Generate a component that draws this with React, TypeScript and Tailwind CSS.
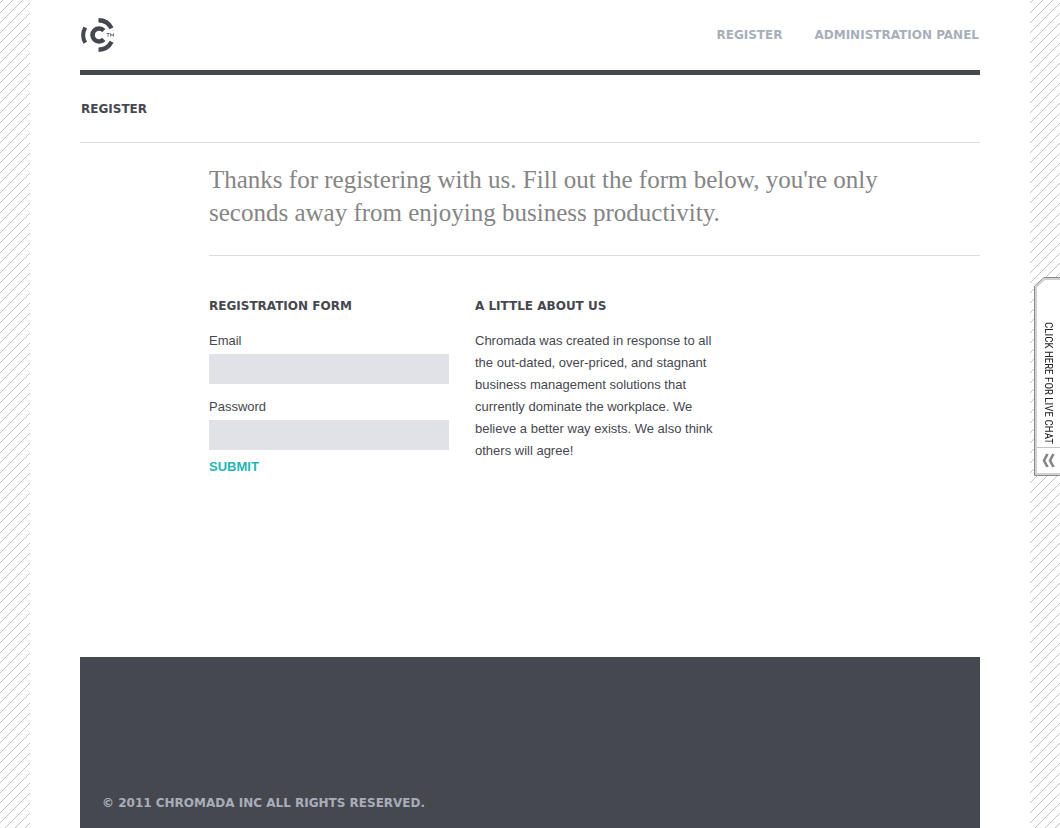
const stripes =
  "bg-[linear-gradient(135deg,#c4c4c7_0_3%,transparent_3%_47%,#c4c4c7_47%_53%,transparent_53%)] bg-size-[10px_10px] bg-position-[3px_0px]";

const caps = "font-['DejaVu_Sans','Verdana',sans-serif] text-[12px] leading-4 font-bold uppercase";

function Logo() {
  return (
    <svg viewBox="0 0 34 34" className="size-[34px]" fill="none" stroke="#464850" aria-hidden="true">
      <path d="M17.500 2.300A15 15 0 0 1 30.600 10.300" strokeWidth="4.400" />
      <path d="M30.600 23.700A15 15 0 0 1 17.500 31.700" strokeWidth="4.400" />
      <path d="M4.300 9.500A15.500 15.500 0 0 0 4.300 24.800" strokeWidth="4" />
      <path d="M22.800 12.600A6.500 6.500 0 1 0 22.800 21.400" strokeWidth="4.600" />
      <path d="M25.500 15.500h3.200M27.100 15.500v3.200M29.600 18.700v-3.200l1.500 2.200 1.500-2.200v3.200" strokeWidth="0.7" />
    </svg>
  );
}

function Field({ id, label, type }: { id: string; label: string; type: string }) {
  return (
    <div className="mb-3 flex flex-col">
      <label htmlFor={id} className="mb-0.5 leading-[22px]">
        {label}
      </label>
      <input id={id} name={id} type={type} className="h-[30px] w-full bg-[#e1e2e8] px-2 outline-none" />
    </div>
  );
}

export default function App() {
  return (
    <div className="flex min-h-screen bg-white font-['Liberation_Sans',Arial,sans-serif] text-[13px] leading-[22px] text-[#464850]">
      <div className={`w-[30px] shrink-0 ${stripes}`} />
      <div className="flex min-w-0 flex-1 flex-col px-[50px]">
        <header className="flex h-[75px] shrink-0 items-center justify-between border-b-[5px] border-[#464850] px-px">
          <a href="#" aria-label="Chromada">
            <Logo />
          </a>
          <nav className={`flex gap-8 text-[#a8aebb] ${caps}`}>
            <a href="#register">Register</a>
            <a href="#admin">Administration Panel</a>
          </nav>
        </header>
        <div className="flex h-[68px] shrink-0 items-center border-b border-[#dcdcdc] px-px">
          <h1 className={caps}>Register</h1>
        </div>
        <main className="flex-1 pb-12 pl-[129px]">
          <p className="border-b border-[#dcdcdc] pt-5 pb-[26px] pr-20 font-['Liberation_Serif',serif] text-[25px] leading-[33px] text-[#858585]">
            Thanks for registering with us. Fill out the form below, you're only seconds away from enjoying
            business productivity.
          </p>
          <div className="flex gap-[26px] pt-[42px]">
            <form className="w-60" onSubmit={(e) => e.preventDefault()}>
              <h2 className={`mb-4 ${caps}`}>Registration Form</h2>
              <Field id="email" label="Email" type="email" />
              <Field id="password" label="Password" type="password" />
              <button type="submit" className="-mt-1.5 block font-bold text-[#1fb5b5]">
                SUBMIT
              </button>
            </form>
            <section className="w-60">
              <h2 className={`mb-4 ${caps}`}>A Little About Us</h2>
              <p>
                Chromada was created in response to all the out-dated, over-priced, and stagnant business
                management solutions that currently dominate the workplace. We believe a better way exists. We
                also think others will agree!
              </p>
            </section>
          </div>
        </main>
        <footer className={`flex h-[171px] shrink-0 items-end bg-[#464850] px-[22px] pb-[17px] text-[#a9adb9] ${caps}`}>
          <p>© 2011 Chromada Inc All Rights Reserved.</p>
        </footer>
      </div>
      <div className={`w-[30px] shrink-0 ${stripes}`} />
      <a href="#chat" className="fixed top-[277px] right-0 flex h-[199px] w-[26px] flex-col items-center">
        <svg viewBox="0 0 26 199" className="absolute inset-0 size-full" fill="none" aria-hidden="true">
          <path d="M26 .5H10L.5 9V198.500H26" fill="#fff" stroke="#8a8a8a" />
          <path d="M26 2H10.500L2 9.700V197H26" stroke="#d0d0d0" strokeWidth="2" />
          <path d="M3 170.500H26" stroke="#c4c4c4" />
          <path d="M13.500 177L10 183.500L13.500 190M19.500 177L16 183.500L19.500 190" stroke="#858585" strokeWidth="2.600" />
        </svg>
        <span className="relative mt-[45px] ml-[2px] whitespace-nowrap font-['Roboto_Condensed',Roboto,sans-serif] text-[11px] leading-4 text-[#222] [writing-mode:vertical-rl]">
          CLICK HERE FOR LIVE CHAT
        </span>
      </a>
    </div>
  );
}
